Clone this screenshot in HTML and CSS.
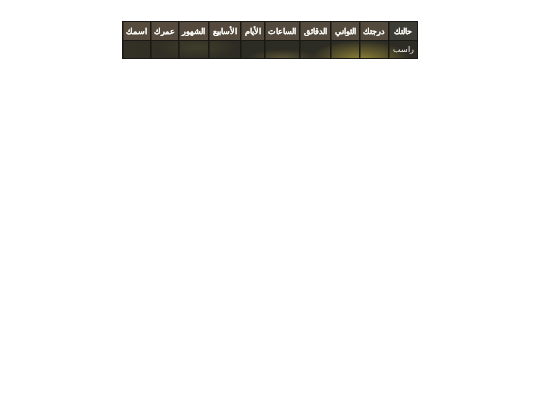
FILE: index.html
```html
<!DOCTYPE html>
<html lang="ar" dir="rtl">
<head>
<meta charset="utf-8">
<title>النتيجة</title>
<link rel="stylesheet" href="styles.css">
</head>
<body>
<table class="result">
<thead>
<tr>
<th class="c1">حالتك</th><th class="c2">درجتك</th><th class="c3">الثواني</th><th class="c4">الدقائق</th><th class="c5">الساعات</th><th class="c6">الأيام</th><th class="c7">الأسابيع</th><th class="c8">الشهور</th><th class="c9">عمرك</th><th class="c10">اسمك</th>
</tr>
</thead>
<tbody>
<tr>
<td>راسب</td><td></td><td></td><td></td><td></td><td></td><td></td><td></td><td></td><td></td>
</tr>
</tbody>
</table>
</body>
</html>
```
FILE: styles.css
```css
html, body { margin: 0; background: #fff; }
body { padding-top: 21px; font-family: "Liberation Sans", sans-serif; }
.result {
  direction: rtl;
  margin: 0 auto;
  width: 296px;
  height: 38px;
  table-layout: fixed;
  border-collapse: collapse;
  background-color: #2d2c24;
  background-image:
    radial-gradient(ellipse 50px 19px at 238px 38px, rgba(190,170,60,.68), transparent),
    radial-gradient(ellipse 34px 8px at 160px 36px, rgba(170,150,80,.35), transparent),
    radial-gradient(ellipse 40px 12px at 75px 26px, rgba(110,110,60,.25), transparent),
    linear-gradient(90deg, rgba(70,60,40,.25), transparent 40%);
  border: 1px solid #1c1c1a;
  filter: blur(.25px);
}
.result th, .result td {
  border: 1px solid #191916;
  box-shadow: inset 1px 0 0 rgba(20,20,16,.45);
  padding: 0;
  text-align: center;
  vertical-align: middle;
  color: #f4f4f0;
  font-size: 7.6px;
  overflow: hidden;
}
.result th {
  height: 18px;
  font-weight: bold;
  background: rgba(125,105,88,.48);
  text-shadow: 0 0 .5px #fff;
}
.result th.c1 { background: rgba(80,78,70,.5); }
.result td { height: 17px; font-weight: normal; }
.c1 { width: 28px; }
.c2 { width: 28px; }
.c3 { width: 28px; }
.c4 { width: 30px; }
.c5 { width: 34px; }
.c6 { width: 23px; }
.c7 { width: 31px; }
.c8 { width: 29px; }
.c9 { width: 27px; }
.c10 { width: 27px; }
```
